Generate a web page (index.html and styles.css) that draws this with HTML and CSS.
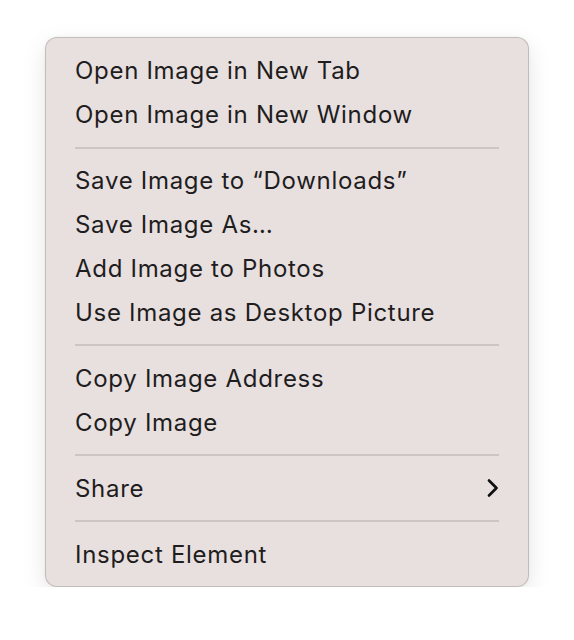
FILE: index.html
```html
<!DOCTYPE html>
<html>
<head>
<meta charset="utf-8">
<link rel="stylesheet" href="styles.css">
</head>
<body>
<div class="menu">
  <div class="item">Open Image in New Tab</div>
  <div class="item">Open Image in New Window</div>
  <div class="sep"></div>
  <div class="item">Save Image to “Downloads”</div>
  <div class="item">Save Image As…</div>
  <div class="item">Add Image to Photos</div>
  <div class="item">Use Image as Desktop Picture</div>
  <div class="sep"></div>
  <div class="item">Copy Image Address</div>
  <div class="item">Copy Image</div>
  <div class="sep"></div>
  <div class="item sub">Share
    <svg class="chev" width="14" height="20" viewBox="0 0 14 20"><path d="M3 2.5 L10.5 10 L3 17.5" fill="none" stroke="#111" stroke-width="2.7" stroke-linecap="round" stroke-linejoin="round"/></svg>
  </div>
  <div class="sep"></div>
  <div class="item">Inspect Element</div>
</div>
</body>
</html>
```
FILE: styles.css
```css
html, body {
  margin: 0;
  padding: 0;
  background: #ffffff;
}
body {
  padding: 37px 0 0 45px;
  font-family: Inter, "Noto Sans", sans-serif;
}
.menu {
  box-sizing: border-box;
  width: 484px;
  height: 550px;
  padding: 11px 29px 10px 29px;
  background: #e8e0de;
  border: 1px solid rgba(0, 0, 0, 0.16);
  border-radius: 12px;
  box-shadow: 0 8px 24px rgba(0, 0, 0, 0.10), 0 0 4px rgba(0, 0, 0, 0.04);
  display: flex;
  flex-direction: column;
}
.item {
  height: 44px;
  display: flex;
  align-items: center;
  font-size: 24px;
  color: #1f1d1e;
  letter-spacing: 0.7px;
}
.sub {
  justify-content: space-between;
}
.chev {
  margin-right: -1px;
}
.sep {
  height: 22px;
  display: flex;
  align-items: center;
}
.sep::before {
  content: "";
  display: block;
  width: 100%;
  height: 2px;
  background: #cdc5c3;
}
```
